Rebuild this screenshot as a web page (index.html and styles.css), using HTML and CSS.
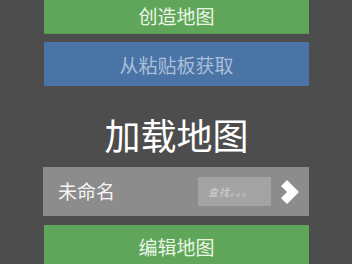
FILE: index.html
```html
<!DOCTYPE html>
<html lang="zh">
<head>
    <meta charset="UTF-8">
    <meta name="viewport" content="width=device-width, initial-scale=1.0">
    <title>地图</title>
    <link rel="stylesheet" href="styles.css">
</head>
<body>
    <div class="menu">
        <button class="btn btn-green btn-top">创造地图</button>
        <button class="btn btn-blue">从粘贴板获取</button>

        <h1 class="title">加载地图</h1>

        <div class="map-row">
            <span class="map-name">未命名</span>
            <input class="search" type="text" placeholder="查找。。。">
            <button class="next" aria-label="下一个">
                <svg width="20" height="26" viewBox="0 0 20 26">
                    <polygon points="1,7 7,1 19,13 7,25 1,19 7,13" fill="#ffffff"/>
                </svg>
            </button>
        </div>

        <button class="btn btn-green">编辑地图</button>
    </div>
</body>
</html>
```

FILE: styles.css
```css
* {
    margin: 0;
    padding: 0;
    box-sizing: border-box;
}

body {
    background-color: #4d4d4d;
    font-family: "Noto Sans CJK SC", "Noto Sans", sans-serif;
    overflow: hidden;
}

.menu {
    width: 266px;
    margin: 0 auto;
    padding-left: 1px;
    display: flex;
    flex-direction: column;
}

.btn {
    height: 44px;
    border: none;
    font-family: inherit;
    font-size: 19px;
    cursor: pointer;
}

.btn-top {
    height: 36px;
    margin-top: -2px;
    margin-bottom: 8px;
}

.btn-green {
    background-color: #5fa65b;
    color: #eaf6e4;
    border-bottom: 1px solid #559a52;
}

.btn-blue {
    background-color: #4a74a5;
    color: #a9bfda;
}

.title {
    margin: 28px 0 13px;
    font-size: 36px;
    line-height: 40px;
    font-weight: normal;
    color: #ffffff;
    text-align: center;
}

.map-row {
    height: 49px;
    margin-bottom: 9px;
    margin-left: -1px;
    background-color: #8c8c8c;
    display: flex;
    align-items: center;
    padding: 0 9px 0 15px;
}

.map-name {
    flex: 1;
    font-size: 19px;
    color: #f4f4f4;
    margin-top: -2px;
}

.search {
    width: 73px;
    height: 29px;
    border: none;
    outline: none;
    background-color: #a3a3a3;
    padding-left: 10px;
    font-family: inherit;
    font-size: 10px;
    font-style: italic;
    letter-spacing: 1px;
    color: #eeeeee;
}

.search::placeholder {
    color: #d6d6d6;
}

.next {
    width: 20px;
    height: 26px;
    margin-left: 9px;
    background: none;
    border: none;
    display: flex;
}
```
